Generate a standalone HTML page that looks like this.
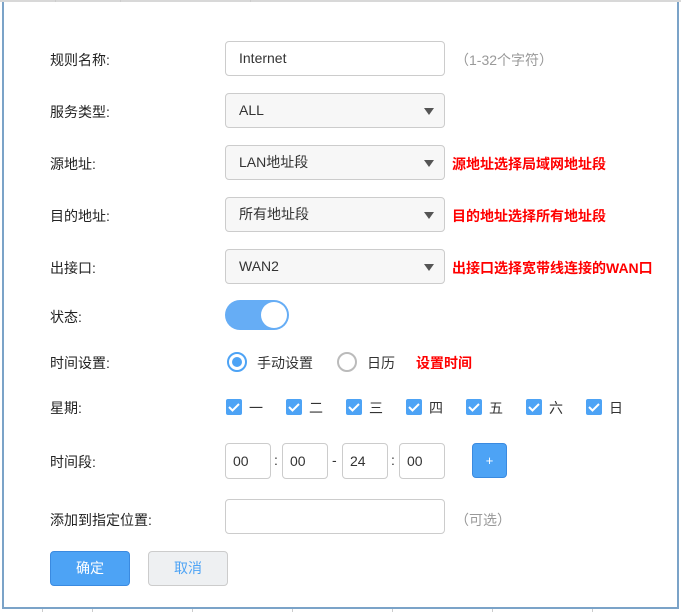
<!DOCTYPE html>
<html><head><meta charset="utf-8"><style>
*{box-sizing:border-box;margin:0;padding:0}
body{width:681px;height:612px;background:#fff;position:relative;overflow:hidden;font-family:"Liberation Sans","Noto Sans CJK SC",sans-serif;font-size:14px;color:#333}
.a{position:absolute}
.frame{left:2px;top:2px;width:677px;height:607px;border-left:2px solid #7ba3c8;border-right:2px solid #7ba3c8;border-bottom:2px solid #7ba3c8}
.sep{width:1px;background:#ccc}
.lbl{left:50px;font-size:14px;color:#222}
.in{left:225px;width:220px;height:35px;border:1px solid #ccc;border-radius:4px;background:#fff;padding-left:13px;line-height:33px;font-size:14px;color:#333}
.sel{background:#f7f7f7}
.sel:after{content:"";position:absolute;right:10px;top:14px;border-left:5px solid transparent;border-right:5px solid transparent;border-top:7px solid #555}
.red{color:#f00;font-size:14px;font-weight:bold}
.gray{color:#999}
.cb{width:16px;height:16px;background:#4da3f5;border-radius:2px}
.cb svg{position:absolute;left:2px;top:3px}
.tb{width:46px;height:36px;border:1px solid #ccc;border-radius:4px;padding-left:7px;line-height:34px;top:443px}
</style></head><body>
<div class="a" style="left:0;top:0;width:681px;height:2px;background:#d8d8d8"></div>
<div class="a sep" style="left:55px;top:0;height:2px"></div>
<div class="a sep" style="left:120px;top:0;height:2px"></div>
<div class="a sep" style="left:250px;top:0;height:2px"></div>
<div class="a frame"></div>
<div class="a sep" style="left:42px;top:609px;height:3px"></div>
<div class="a sep" style="left:92px;top:609px;height:3px"></div>
<div class="a sep" style="left:192px;top:609px;height:3px"></div>
<div class="a sep" style="left:292px;top:609px;height:3px"></div>
<div class="a sep" style="left:392px;top:609px;height:3px"></div>
<div class="a sep" style="left:492px;top:609px;height:3px"></div>
<div class="a sep" style="left:592px;top:609px;height:3px"></div>

<div class="a lbl" style="top:50px">规则名称:</div>
<div class="a in" style="top:41px">Internet</div>
<div class="a gray" style="left:455px;top:50px">（1-32个字符）</div>

<div class="a lbl" style="top:102px">服务类型:</div>
<div class="a in sel" style="top:93px">ALL</div>

<div class="a lbl" style="top:154px">源地址:</div>
<div class="a in sel" style="top:145px">LAN地址段</div>
<div class="a red" style="left:452px;top:154px">源地址选择局域网地址段</div>

<div class="a lbl" style="top:206px">目的地址:</div>
<div class="a in sel" style="top:197px">所有地址段</div>
<div class="a red" style="left:452px;top:206px">目的地址选择所有地址段</div>

<div class="a lbl" style="top:258px">出接口:</div>
<div class="a in sel" style="top:249px">WAN2</div>
<div class="a red" style="left:452px;top:258px">出接口选择宽带线连接的WAN口</div>

<div class="a lbl" style="top:307px">状态:</div>
<div class="a" style="left:225px;top:300px;width:64px;height:30px;border-radius:15px;background:#66adf5"></div>
<div class="a" style="left:261px;top:302px;width:26px;height:26px;border-radius:13px;background:#fff"></div>

<div class="a lbl" style="top:353px">时间设置:</div>
<div class="a" style="left:227px;top:352px;width:20px;height:20px;border-radius:10px;border:2px solid #4da3f5"></div>
<div class="a" style="left:232px;top:357px;width:10px;height:10px;border-radius:5px;background:#4da3f5"></div>
<div class="a" style="left:257px;top:353px">手动设置</div>
<div class="a" style="left:337px;top:352px;width:20px;height:20px;border-radius:10px;border:2px solid #bbb"></div>
<div class="a" style="left:367px;top:353px">日历</div>
<div class="a red" style="left:416px;top:353px">设置时间</div>

<div class="a lbl" style="top:398px">星期:</div>
<div class="a cb" style="left:226px;top:399px"><svg width="12" height="10"><path d="M1 5l3.5 3.5L11 2" stroke="#fff" stroke-width="2" fill="none"/></svg></div><div class="a" style="left:249px;top:398px">一</div>
<div class="a cb" style="left:286px;top:399px"><svg width="12" height="10"><path d="M1 5l3.5 3.5L11 2" stroke="#fff" stroke-width="2" fill="none"/></svg></div><div class="a" style="left:309px;top:398px">二</div>
<div class="a cb" style="left:346px;top:399px"><svg width="12" height="10"><path d="M1 5l3.5 3.5L11 2" stroke="#fff" stroke-width="2" fill="none"/></svg></div><div class="a" style="left:369px;top:398px">三</div>
<div class="a cb" style="left:406px;top:399px"><svg width="12" height="10"><path d="M1 5l3.5 3.5L11 2" stroke="#fff" stroke-width="2" fill="none"/></svg></div><div class="a" style="left:429px;top:398px">四</div>
<div class="a cb" style="left:466px;top:399px"><svg width="12" height="10"><path d="M1 5l3.5 3.5L11 2" stroke="#fff" stroke-width="2" fill="none"/></svg></div><div class="a" style="left:489px;top:398px">五</div>
<div class="a cb" style="left:526px;top:399px"><svg width="12" height="10"><path d="M1 5l3.5 3.5L11 2" stroke="#fff" stroke-width="2" fill="none"/></svg></div><div class="a" style="left:549px;top:398px">六</div>
<div class="a cb" style="left:586px;top:399px"><svg width="12" height="10"><path d="M1 5l3.5 3.5L11 2" stroke="#fff" stroke-width="2" fill="none"/></svg></div><div class="a" style="left:609px;top:398px">日</div>

<div class="a lbl" style="top:452px">时间段:</div>
<div class="a tb" style="left:225px">00</div>
<div class="a" style="left:274px;top:452px">:</div>
<div class="a tb" style="left:282px">00</div>
<div class="a" style="left:332px;top:452px">-</div>
<div class="a tb" style="left:342px">24</div>
<div class="a" style="left:391px;top:452px">:</div>
<div class="a tb" style="left:399px">00</div>
<div class="a" style="left:472px;top:443px;width:35px;height:35px;border-radius:4px;background:#4da3f5;border:1px solid #3a8ae0;color:#fff;text-align:center;line-height:33px;font-size:13px">+</div>

<div class="a lbl" style="top:510px">添加到指定位置:</div>
<div class="a in" style="top:499px"></div>
<div class="a gray" style="left:455px;top:510px">（可选）</div>

<div class="a" style="left:50px;top:551px;width:80px;height:35px;border-radius:4px;background:#4da3f5;border:1px solid #3a8ae0;color:#fff;text-align:center;line-height:33px">确定</div>
<div class="a" style="left:148px;top:551px;width:80px;height:35px;border-radius:4px;background:#eef0f2;border:1px solid #ccc;color:#4da3f5;text-align:center;line-height:33px">取消</div>
</body></html>
